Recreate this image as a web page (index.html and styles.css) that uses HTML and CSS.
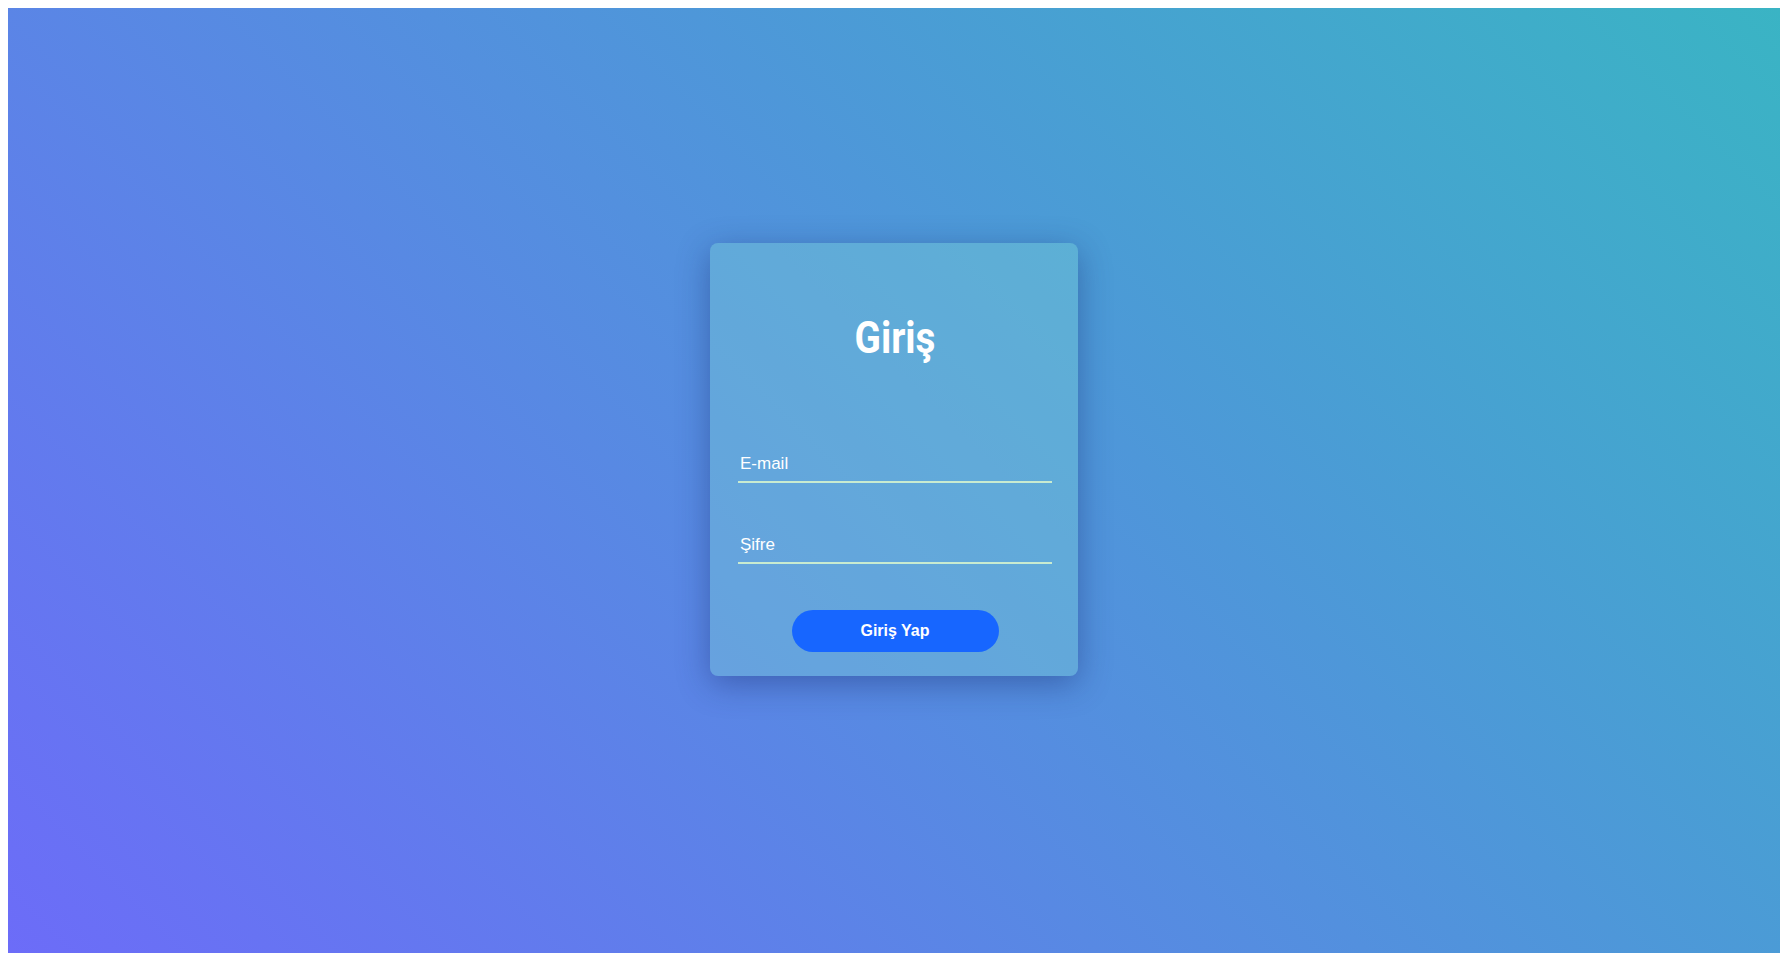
FILE: index.html
```html
<!DOCTYPE html>
<html lang="tr">
<head>
<meta charset="utf-8">
<title>Giriş</title>
<link rel="stylesheet" href="styles.css">
</head>
<body>
<main class="page">
  <form class="card">
    <h1 class="title"><span>Giriş</span></h1>
    <input class="field field-email" type="email" placeholder="E-mail">
    <input class="field field-pass" type="password" placeholder="Şifre">
    <button class="btn" type="button">Giriş Yap</button>
  </form>
</main>
</body>
</html>
```

FILE: styles.css
```css
html, body {
  margin: 0;
  padding: 0;
}
body {
  margin: 8px;
  font-family: "Liberation Sans", Arial, sans-serif;
}
.page {
  height: calc(100vh - 16px);
  background: linear-gradient(45deg, #6c6cf8, #3ab4c4);
  display: flex;
  justify-content: center;
  align-items: flex-start;
  box-sizing: border-box;
  padding-top: 235px;
}
.card {
  width: 368px;
  box-sizing: border-box;
  padding: 73px 26px 24px 28px;
  background: rgba(130, 220, 210, 0.32);
  border-radius: 8px;
  box-shadow: 0 8px 32px rgba(25, 40, 110, 0.42);
  display: flex;
  flex-direction: column;
  align-items: flex-start;
}
.title {
  margin: 0;
  align-self: center;
  font-family: Roboto, "Liberation Sans", sans-serif;
  font-weight: 700;
  font-size: 44px;
  line-height: 44px;
  color: #ffffff;
}
.title span {
  display: inline-block;
  transform: scaleX(0.88);
}
.field {
  width: 314px;
  height: 35px;
  box-sizing: border-box;
  padding: 0 2px 1px;
  border: none;
  border-bottom: 2px solid #c8ebd0;
  background: transparent;
  outline: none;
  font-family: "Liberation Sans", Arial, sans-serif;
  font-size: 17px;
  color: #ffffff;
}
.field::placeholder {
  color: #ffffff;
  opacity: 1;
}
.field-email {
  margin-top: 88px;
}
.field-pass {
  margin-top: 46px;
}
.btn {
  align-self: center;
  margin-top: 46px;
  width: 207px;
  height: 42px;
  border: none;
  border-radius: 21px;
  background: #1766ff;
  color: #ffffff;
  font-family: "Liberation Sans", Arial, sans-serif;
  font-weight: 700;
  font-size: 16px;
  cursor: pointer;
}
```
